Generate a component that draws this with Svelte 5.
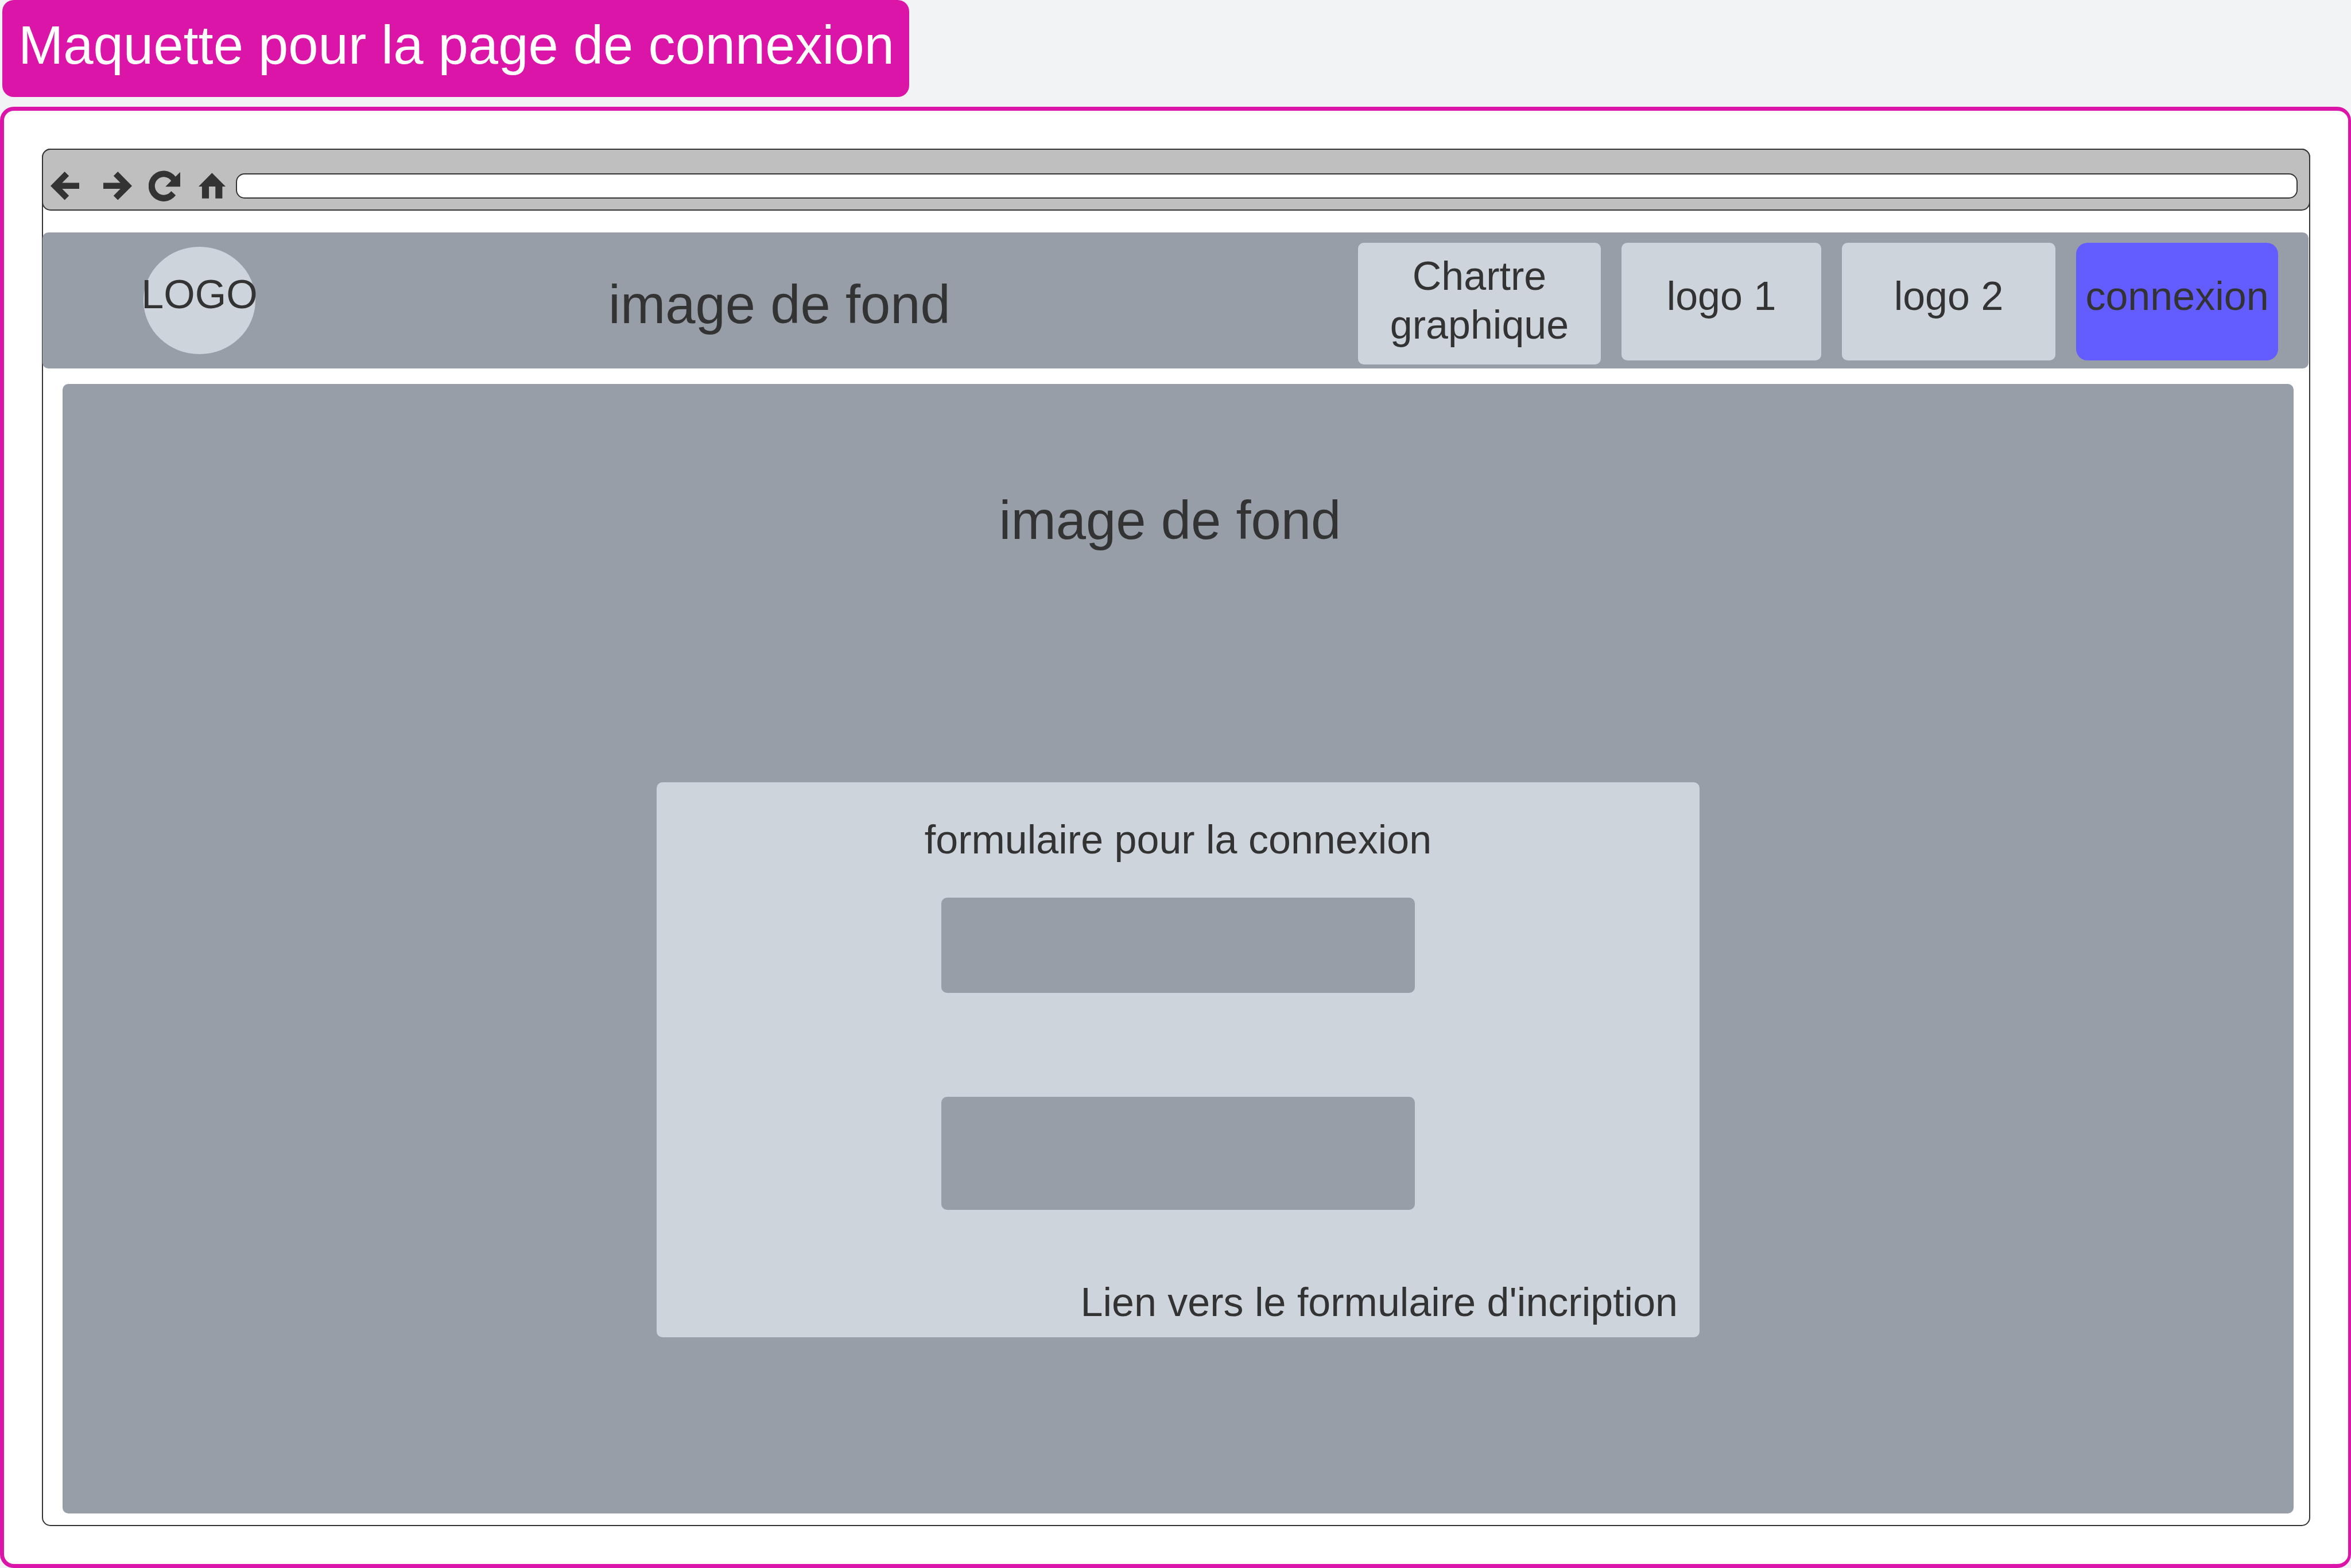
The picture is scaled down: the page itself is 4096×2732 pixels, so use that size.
<script lang="ts">
  let url = $state('');
  let identifiant = $state('');
  let motDePasse = $state('');
</script>

<div class="page">
  <h1 class="title">Maquette pour la page de connexion</h1>

  <section class="frame">
    <div class="browser">
      <div class="toolbar">
        <button type="button" class="tool" aria-label="Précédent">
          <svg width="50" height="50" viewBox="0 0 160 160">
            <path d="M0 80 79 0 103 24 65 62H160V96H65L103 134 79 158Z" />
          </svg>
        </button>
        <button type="button" class="tool" aria-label="Suivant">
          <svg width="50" height="50" viewBox="0 0 160 160">
            <path d="M160 80 81 0 57 24 95 62H0V96H95L57 134 81 158Z" />
          </svg>
        </button>
        <button type="button" class="tool" aria-label="Actualiser">
          <svg width="55" height="54" viewBox="0 0 175 172">
            <path
              d="M149 34 175 9V90H93L125 57A50 50 0 1 0 125 115L150 138A84 85 0 1 1 149 34Z"
            />
          </svg>
        </button>
        <button type="button" class="tool" aria-label="Accueil">
          <svg width="47" height="45" viewBox="0 0 151 143">
            <path d="M75 0 151 76H133V143H94V76H58V143H19V76H0Z" />
          </svg>
        </button>
        <input class="url" type="text" aria-label="Adresse" bind:value={url} />
      </div>

      <header class="header">
        <a class="logo" href="#accueil">LOGO</a>
        <p class="banner">image de fond</p>
        <nav class="nav">
          <a class="item chart" href="#charte">Chartre graphique</a>
          <a class="item first" href="#logo1">logo 1</a>
          <a class="item second" href="#logo2">logo 2</a>
          <button type="button" class="item login">connexion</button>
        </nav>
      </header>

      <main class="hero">
        <p class="caption">image de fond</p>
        <form class="card">
          <h2>formulaire pour la connexion</h2>
          <input class="field name" type="text" aria-label="Identifiant" bind:value={identifiant} />
          <input class="field pass" type="password" aria-label="Mot de passe" bind:value={motDePasse} />
          <a class="signup" href="#inscription">Lien vers le formulaire d'incription</a>
        </form>
      </main>
    </div>
  </section>
</div>

<style>
  :global(body) {
    background: #f1f3f5;
  }

  .page {
    --ink: #333;
    --pink: #db15a8;
    --slate: #979ea8;
    --mist: #ced4dc;
    --violet: #635dff;
    box-sizing: border-box;
    display: flex;
    flex-direction: column;
    min-height: 100vh;
    color: var(--ink);
    font-family: 'Liberation Sans', Arial, sans-serif;
    font-size: 70px;
    line-height: 85px;
  }

  .page :is(h1, h2, p, a, button, input) {
    box-sizing: border-box;
    margin: 0;
    color: inherit;
    font: inherit;
    text-decoration: none;
  }

  .page .title {
    align-self: flex-start;
    margin: 0 0 17px 4px;
    padding: 22px 26px 33px 28px;
    border-radius: 20px;
    background: var(--pink);
    color: #fff;
    font-size: 94px;
    line-height: 114px;
  }

  .frame {
    display: flex;
    flex: 1;
    padding: 66px;
    border: 7px solid var(--pink);
    border-right-width: 5px;
    border-radius: 24px;
    background: #fff;
  }

  .browser {
    display: flex;
    flex: 1;
    flex-direction: column;
    min-width: 0;
    border: 2px solid var(--ink);
    border-radius: 15px;
  }

  .toolbar {
    box-sizing: border-box;
    display: grid;
    grid-template-columns: 92px 79px 87px 65px 1fr;
    align-items: center;
    height: 108px;
    margin: -2px -2px 38px;
    padding: 21px 20px 0 13px;
    border: 2px solid var(--ink);
    border-radius: 15px;
    background: #bfbfbf;
  }

  .page .tool {
    display: flex;
    padding: 0;
    border: 0;
    background: none;
  }

  .tool svg {
    fill: var(--ink);
  }

  .page .url {
    width: 100%;
    height: 44px;
    padding: 0 16px;
    border: 2px solid var(--ink);
    border-radius: 15px;
    background: #fff;
    font-size: 28px;
  }

  .header {
    display: flex;
    align-items: flex-start;
    height: 237px;
    box-sizing: border-box;
    margin: 0 1px 27px -1px;
    padding: 18px 53px 0 176px;
    border-radius: 10px;
    background: var(--slate);
  }

  .page .logo {
    display: flex;
    align-items: center;
    justify-content: center;
    width: 195px;
    height: 187px;
    margin-top: 7px;
    padding-bottom: 20px;
    border-radius: 50%;
    background: var(--mist);
  }

  .page .banner,
  .page .caption {
    font-size: 94px;
    line-height: 114px;
    text-align: center;
  }

  .page .banner {
    flex: 1;
    padding: 51px 403px 0 308px;
    white-space: nowrap;
  }

  .nav {
    display: flex;
    align-items: flex-start;
    gap: 36px;
  }

  .page .item {
    display: flex;
    align-items: center;
    justify-content: center;
    height: 205px;
    padding: 0 0 18px;
    border: 0;
    border-radius: 10px;
    background: var(--mist);
    text-align: center;
  }

  .page .chart {
    width: 423px;
    height: 212px;
    padding: 0 40px 10px;
  }

  .page .first {
    width: 348px;
  }

  .page .second {
    width: 372px;
  }

  .page .login {
    width: 352px;
    border-radius: 20px;
    background: var(--violet);
  }

  .hero {
    display: flex;
    flex: 1;
    flex-direction: column;
    align-items: center;
    margin: 0 27px 20px 34px;
    padding: 181px 0;
    border-radius: 10px;
    background: var(--slate);
  }

  .page .caption {
    padding-right: 28px;
  }

  .card {
    box-sizing: border-box;
    display: flex;
    flex-direction: column;
    align-items: center;
    width: 100%;
    max-width: 1817px;
    margin-top: 399px;
    padding: 58px 38px 18px;
    border-radius: 10px;
    background: var(--mist);
  }

  .page .field {
    width: 100%;
    max-width: 825px;
    padding: 0 32px;
    border: 0;
    border-radius: 10px;
    background: var(--slate);
  }

  .page .name {
    height: 166px;
    margin-top: 58px;
  }

  .page .pass {
    height: 197px;
    margin-top: 181px;
  }

  .page .signup {
    align-self: flex-end;
    margin-top: 119px;
  }
</style>
